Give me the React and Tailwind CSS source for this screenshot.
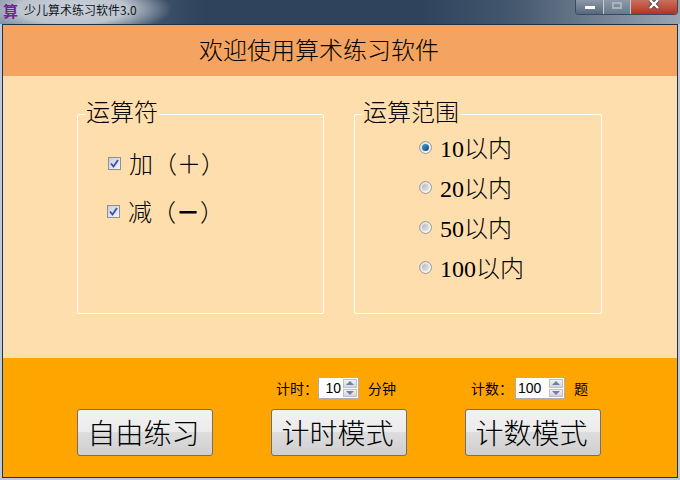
const cjk = "font-['Noto_Sans_CJK_SC',sans-serif]";
const mix = "font-['Liberation_Serif','Noto_Sans_CJK_SC',serif]";

function Check() {
  return (
    <span className="w-[13px] h-[13px] shrink-0 border border-[#8e8f8f] bg-gradient-to-br from-[#c9cfe0] to-[#f2f3f8] flex items-center justify-center">
      <svg width="9" height="9" viewBox="0 0 9 9">
        <path d="M1 4.5 L3.5 7.5 L8 1" fill="none" stroke="#3c4fa8" strokeWidth="1.8" />
      </svg>
    </span>
  );
}

function Radio({ on }) {
  return (
    <span className="w-[13px] h-[13px] shrink-0 rounded-full border border-[#9a9a9a] bg-gradient-to-br from-[#dcdcdc] to-[#f8f8f8] flex items-center justify-center">
      <span className={`w-[7px] h-[7px] rounded-full ${on ? "bg-gradient-to-br from-[#3f9bd0] to-[#0d4f80]" : "bg-gradient-to-br from-[#b8b8b8] to-[#e8e8e8]"}`} />
    </span>
  );
}

function Spinner({ value, width, align }) {
  return (
    <div className={`h-[22px] ${width} bg-white border border-[#abadb3] flex items-center justify-between pr-px`}>
      <span className={`flex-1 text-[14px] leading-none text-black font-['Liberation_Sans',sans-serif] ${align}`}>{value}</span>
      <div className="flex flex-col w-[14px] h-[18px] gap-px">
        <span className="flex-1 bg-gradient-to-b from-[#f2f2f2] to-[#d5d5d5] border border-[#c0c0c0] flex items-center justify-center">
          <span className="w-0 h-0 border-x-[4px] border-x-transparent border-b-[4px] border-b-[#6a7fb5]" />
        </span>
        <span className="flex-1 bg-gradient-to-b from-[#f2f2f2] to-[#d5d5d5] border border-[#c0c0c0] flex items-center justify-center">
          <span className="w-0 h-0 border-x-[4px] border-x-transparent border-t-[4px] border-t-[#6a7fb5]" />
        </span>
      </div>
    </div>
  );
}

function Big({ children }) {
  return (
    <button className={`w-[136px] h-[47px] pr-[3px] pb-[2px] rounded-[3px] border border-[#707070] bg-[linear-gradient(#f2f2f2_0%,#ebebeb_48%,#dddddd_50%,#cfcfcf_100%)] text-[28px] font-light leading-none text-black ${cjk}`}>
      {children}
    </button>
  );
}

function RadioRow({ on, children }) {
  return (
    <div className="flex items-center gap-[8px]">
      <Radio on={on} />
      <span className="pt-[4px] leading-[24px]">{children}</span>
    </div>
  );
}

export default function App() {
  return (
    <div className="w-[680px] h-[480px] overflow-hidden flex flex-col bg-[#b9cbdd]">
      <div className="h-[24px] shrink-0 flex items-start justify-between bg-[radial-gradient(ellipse_100px_27px_at_72px_9px,#c9d0d8_0%,#bcc4ce_55%,transparent_100%),linear-gradient(90deg,#6d7f95_0%,#2f435d_30%,#2f435d_62%,#45596f_76%,#8793a3_94%,#9aa5b3_100%)]">
        <div className="flex items-center h-[20px]">
          <span className={`ml-[3px] w-[16px] text-[15px] leading-none font-bold text-[#7b1f96] ${cjk}`}>算</span>
          <span className={`ml-[5px] text-[12px] leading-none text-[#10151c] ${cjk}`}>少儿算术练习软件3.0</span>
        </div>
        <div className="mr-[2px] w-[103px] h-[15px] flex rounded-b-[4px] border border-t-0 border-[#3a4a5e] overflow-hidden">
          <span className="w-[28px] border-r border-[#c4ccd6] bg-gradient-to-b from-[#8d98a7] to-[#56677c] flex justify-center pt-[6px]">
            <span className="w-[10px] h-[3px] bg-white" />
          </span>
          <span className="w-[27px] border-r border-[#c4ccd6] bg-gradient-to-b from-[#8f9aa8] to-[#68788c] flex justify-center pt-[2px]">
            <span className="w-[10px] h-[7px] border-2 border-[#aab3be]" />
          </span>
          <span className="flex-1 bg-gradient-to-b from-[#c9705e] to-[#b5301c] flex justify-center">
            <svg width="12" height="10" viewBox="0 0 12 10">
              <path d="M2 0 L10 8 M10 0 L2 8" stroke="#4a4a55" strokeWidth="4" />
              <path d="M2 0 L10 8 M10 0 L2 8" stroke="#ffffff" strokeWidth="2.4" />
            </svg>
          </span>
        </div>
      </div>

      <div className="flex-1 mx-[2px] mb-[2px] border border-[#1f3147] flex flex-col text-black">
        <div className={`h-[51px] shrink-0 bg-[#f4a460] pl-[196px] pb-[3px] flex items-center text-[24px] leading-none font-light ${cjk}`}>
          欢迎使用算术练习软件
        </div>

        <div className="h-[282px] shrink-0 bg-[#ffdead] pl-[74px] pt-[22px] flex gap-[30px] items-start">
          <fieldset className="w-[247px] h-[216px] rounded-[2px] border border-white">
            <legend className={`ml-[7px] px-px pb-[6px] text-[24px] leading-[26px] font-light ${cjk}`}>运算符</legend>
            <div className={`flex flex-col gap-[20px] pt-[19px] pl-[30px] text-[24px] leading-[28px] font-light ${cjk}`}>
              <div className="flex items-center gap-[8px]"><Check /><span>加（＋）</span></div>
              <div className="flex items-center gap-[8px] -ml-px"><Check /><span>减（<span className="font-bold">－</span>）</span></div>
            </div>
          </fieldset>
          <fieldset className="w-[248px] h-[216px] rounded-[2px] border border-white">
            <legend className={`ml-[7px] px-px pb-[6px] text-[24px] leading-[26px] font-light ${cjk}`}>运算范围</legend>
            <div className={`flex flex-col gap-[12px] pt-[3px] pl-[64px] text-[24px] font-light ${mix}`}>
              <RadioRow on>10以内</RadioRow>
              <RadioRow>20以内</RadioRow>
              <RadioRow>50以内</RadioRow>
              <RadioRow>100以内</RadioRow>
            </div>
          </fieldset>
        </div>

        <div className="flex-1 bg-[#ffa500] pl-[74px] pt-[19px] flex gap-[58px]">
          <div className="w-[136px] pt-[32px]"><Big>自由练习</Big></div>
          <div className="w-[136px] flex flex-col gap-[10px]">
            <div className={`h-[22px] pl-[5px] flex items-center text-[14px] leading-none whitespace-nowrap ${cjk}`}>
              <span className="w-[42px]">计时：</span>
              <Spinner value="10" width="w-[41px] shrink-0" align="text-right pr-[2px]" />
              <span className="ml-[9px]">分钟</span>
            </div>
            <Big>计时模式</Big>
          </div>
          <div className="w-[136px] flex flex-col gap-[10px]">
            <div className={`h-[22px] pl-[6px] flex items-center text-[14px] leading-none whitespace-nowrap ${cjk}`}>
              <span className="w-[44px]">计数：</span>
              <Spinner value="100" width="w-[50px] shrink-0" align="pl-[2px]" />
              <span className="ml-[9px]">题</span>
            </div>
            <Big>计数模式</Big>
          </div>
        </div>
      </div>
    </div>
  );
}
